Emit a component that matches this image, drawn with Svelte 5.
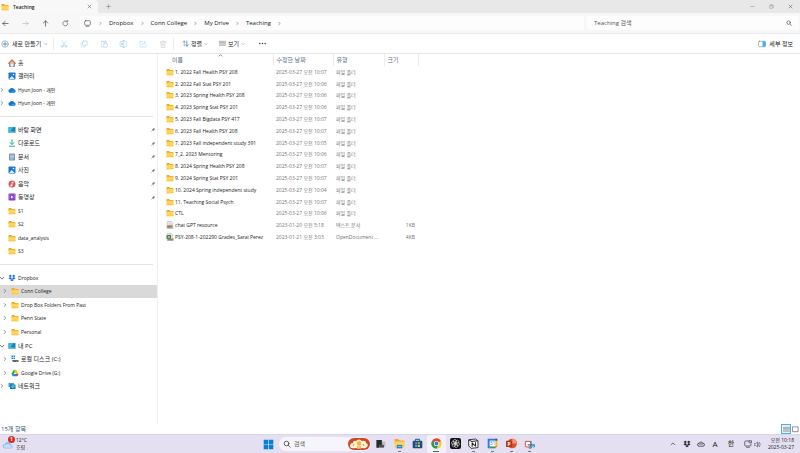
<script>
  const quick = [
    ['desktop', '바탕 화면', true], ['download', '다운로드', true], ['document', '문서', true],
    ['picture', '사진', true], ['music', '음악', true], ['video', '동영상', true],
    ['folder', 'S1'], ['folder', 'S2'], ['folder', 'data_analysis'], ['folder', 'S3']
  ];
  const top = [['home', '홈', ''], ['picture', '갤러리', ''], ['cloud', 'Hyun Joon - 개인', 'right'], ['cloud', 'Hyun Joon - 개인', 'right']];
  const tree = [
    ['dropbox', 'Dropbox', 'down', 0], ['folder', 'Conn College', 'right', 1, true],
    ['folder', 'Drop Box Folders From Past', 'right', 1], ['folder', 'Penn State', 'right', 1],
    ['folder', 'Personal', 'right', 1], ['desktop', '내 PC', 'down', 0],
    ['disk', '로컬 디스크 (C:)', 'right', 1], ['drive', 'Google Drive (G:)', 'right', 1],
    ['network', '네트워크', 'right', 0]
  ];
  const folders = [
    ['1. 2022 Fall Health PSY 208', '07'], ['2. 2022 Fall Stat PSY 201', '06'],
    ['3. 2023 Spring Health PSY 208', '06'], ['4. 2023 Spring Stat PSY 201', '06'],
    ['5. 2023 Fall Bigdata PSY 417', '07'], ['6. 2023 Fall Health PSY 208', '07'],
    ['7. 2023 Fall independent study 391', '05'], ['7_2. 2023 Mentoring', '06'],
    ['8. 2024 Spring Health PSY 208', '07'], ['9. 2024 Spring Stat PSY 201', '07'],
    ['10. 2024 Spring independent study', '04'], ['11. Teaching Social Psych', '07'], ['CTL', '06']
  ];
  const files = [
    ...folders.map(([name, m]) => ({ icon: 'folder', name, date: `2025-03-27 오전 10:${m}`, type: '파일 폴더', size: '' })),
    { icon: 'text', name: 'chat GPT resource', date: '2023-01-20 오전 5:18', type: '텍스트 문서', size: '1KB' },
    { icon: 'sheet', name: 'PSY-208-1-202290 Grades_Sarai Perez', date: '2023-01-21 오전 3:03', type: 'OpenDocument ...', size: '4KB' }
  ];
  const tools = [['cut', '잘라내기'], ['copy', '복사'], ['paste', '붙여넣기'], ['rename', '이름 바꾸기'], ['share', '공유'], ['trash', '삭제']];
  const apps = [
    ['taskview', '작업 보기', ''], ['explorer', '파일 탐색기', 'run'], ['store', '스토어', ''], ['chrome', 'Chrome', 'active'],
    ['gpt', 'ChatGPT', ''], ['notion', 'Notion', 'run'], ['calendar', '캘린더', 'run'], ['ppt', 'PowerPoint', 'run'], ['snip', '캡처 도구', 'run']
  ];
  const isKorean = (label) => /^[가-힣]/.test(label);
</script>

{#snippet icon(name, size = 8)}
  <svg class="icon" width={size} height={size} viewBox="0 0 16 16" fill="none" stroke-linecap="round" stroke-linejoin="round" aria-hidden="true">
    {#if name === 'folder'}
      <path d="M1 3.500Q1 2 2.500 2H6l2 2h5.500Q15 4 15 5.500V8H1z" fill="#e9a820" />
      <rect x="1" y="5.500" width="14" height="9" rx="1.200" fill="#ffd35c" />
      <path d="M1.500 13.500h13" stroke="#f3b92f" />
    {:else if name === 'home'}
      <path d="M3 7v8h3.500v-4.500h3V15H13V7L8 3z" fill="#bfc7cf" />
      <path d="M3 8v7h3M13 8v7h-3" stroke="#68737e" stroke-width="1.500" />
      <path d="M1.500 8.500 8 2l6.500 6.500" stroke="#e66b32" stroke-width="2.400" />
    {:else if name === 'picture'}
      <rect x="1" y="1" width="14" height="14" rx="1.500" fill="#1976d2" />
      <path d="m2 14 5.500-6 6 6z" fill="#d7efff" /><circle cx="11" cy="5" r="1.700" fill="#fff" />
    {:else if name === 'cloud'}
      <path d="M4 13.500a3.500 3.500 0 0 1-.4-6.900A5 5 0 0 1 12.600 7 3.300 3.300 0 0 1 12.500 13.500z" fill="#0b75d1" />
      <path d="m4 13.500 6-4.500 4.800 2.500a3 3 0 0 1-2.300 2z" fill="#2aa0ee" />
    {:else if name === 'desktop'}
      <rect x="1" y="2" width="14" height="11.500" rx="1.200" fill="#1684b8" />
      <path d="M1 4Q1 2 3 2h8L3 13.500Q1 13.500 1 12z" fill="#38bddb" /><path d="M4 12h8" stroke="#b9edf7" stroke-width="1.300" />
    {:else if name === 'download'}
      <path d="M8 1.500v9M4 7l4 4 4-4M2.500 14.500h11" stroke="#1ab08a" stroke-width="1.900" />
    {:else if name === 'document'}
      <rect x="2" y="1" width="12" height="14" rx="1.500" fill="#7797b9" /><path d="M5 4.500h6M5 7h6M5 9.500h6M5 12h4" stroke="#e9f2fb" stroke-width="1.200" />
    {:else if name === 'music'}
      <circle cx="8" cy="8" r="7" fill="#d45b55" /><path d="M8 11V4l3 1.500" stroke="#fff" stroke-width="1.500" /><circle cx="6.500" cy="11" r="1.800" fill="#fff" />
    {:else if name === 'video'}
      <rect x="1" y="1" width="14" height="14" rx="1.500" fill="#8643c8" /><path d="m6 5 5 3-5 3z" fill="#fff" /><path d="M3 3v10M13.500 3v10" stroke="#c69bea" stroke-dasharray="1 2.500" />
    {:else if name === 'dropbox' || name === 'dropbox-dark'}
      <path d="m4.500 1.500 3.500 2.300-3.500 2.300L1 3.800zm7 0L15 3.800l-3.500 2.300L8 3.800zm-7 4.700L8 8.500l-3.500 2.300L1 8.500zm7 0L15 8.500l-3.500 2.300L8 8.500zM8 9.800l3.500 2.300L8 14.500l-3.500-2.400z" fill={name === 'dropbox' ? '#0b62f5' : '#202028'} />
    {:else if name === 'disk'}
      <path d="M1 1h3v3H1zm4 0h3v3H5zM1 5h3v3H1zm4 0h3v3H5z" fill="#1889d8" /><path d="M2 10h13v4H4z" fill="#596673" /><path d="M11 12.500h2" stroke="#69e0a3" />
    {:else if name === 'drive'}
      <path d="M5.700 1.500h4.600L15 10h-4.700z" fill="#fbbc04" /><path d="M5.700 1.500 8 5.700 3.300 14.500 1 10z" fill="#0fa958" /><path d="M5.500 10H15l-2.300 4.500H3.300z" fill="#3478ee" /><path d="m11 10 4 0-2.300 4.500z" fill="#ea4335" />
    {:else if name === 'network'}
      <path d="M1 2h11v8H1z" fill="#44a1d2" /><path d="M4 5h11v9H4z" fill="#087fae" /><circle cx="10" cy="9" r="3.200" fill="#62d4e2" /><path d="m8.500 7.500 2.500 3" stroke="#166885" />
    {:else if name === 'text' || name === 'sheet'}
      <path d="M3.500 1h7l3 3v11h-10z" fill="#f5f5f2" stroke="#9b9b96" /><path d="M6 4h4M6 6.500h5" stroke="#aaa" />
      {#if name === 'text'}<path d="M1.500 8h12v6.500h-12z" fill="#b6a392" /><path d="M4 11.500h6" stroke="#65594f" stroke-width="1.500" />{:else}<path d="M1 4h9v8H1z" fill="#277a49" /><path d="m3.500 6 4 4m0-4-4 4" stroke="#fff" stroke-width="1.300" /><path d="M3 11h12v4H3z" fill="#a98459" />{/if}
    {:else if name === 'cut'}
      <path d="m4 1.500 6 9m2-9-6 9" stroke="#b8bec4" /><circle cx="4.500" cy="12.500" r="2" stroke="#8dc9ee" /><circle cx="11.500" cy="12.500" r="2" stroke="#8dc9ee" />
    {:else if name === 'copy'}
      <rect x="5" y="2" width="9.500" height="9" rx="2" stroke="#91cbed" /><path d="M5 5H3.500Q2 5 2 7v5q0 2 2 2h5q2 0 2-2" stroke="#b3cfe0" />
    {:else if name === 'paste'}
      <path d="M5 3H2.500v11H7M11 3h2v3M5 2h6v2H5z" stroke="#bfc5ca" /><rect x="7.500" y="6.500" width="7" height="8" rx="1" stroke="#8dc9ee" />
    {:else if name === 'rename'}
      <path d="M7 3H2v10h5M12 3h2.500v10H12" stroke="#8dc9ee" /><path d="M9.500 1v14M8 1h3M8 15h3M4 10l2-5 2 5M5 8.500h2" stroke="#9cbfd4" />
    {:else if name === 'share'}
      <path d="M7 3H2v11h12v-4M5 10q1-5 7-5M10 2l4 3-4 3" stroke="#9acfee" />
    {:else if name === 'trash'}
      <path d="M2 4h12M6 4V2h4v2M3.500 4l1 11h7l1-11M6.500 7v5M9.500 7v5" stroke="#bfc4c8" />
    {:else if name === 'plus-circle'}
      <circle cx="8" cy="8" r="6.500" stroke="#68747d" /><path d="M8 4.500v7M4.500 8h7" stroke="#2084c6" stroke-width="1.500" />
    {:else if name === 'sort'}
      <path d="M5 14V2M2 5l3-3 3 3" stroke="#727b82" stroke-width="1.300" /><path d="M11 2v12M8 11l3 3 3-3" stroke="#258bce" stroke-width="1.700" />
    {:else if name === 'lines'}
      <path d="M1 3h14M1 6h14M1 9h14M1 12h14" stroke="#777" stroke-width="1.300" />
    {:else if name === 'details'}
      <rect x="1" y="2.500" width="14" height="11" rx="2" stroke="#5d7890" /><path d="M9 2.500h4q2 0 2 2v7q0 2-2 2H9z" fill="#43b0f0" />
    {:else if name === 'monitor'}
      <rect x="1.500" y="1.500" width="13" height="10.500" rx="2" stroke="#555" stroke-width="1.500" /><path d="M5 14.500h6" stroke="#555" stroke-width="1.500" />
    {:else if name === 'left'}<path d="M14 8H2m5-5L2 8l5 5" stroke="#444" stroke-width="1.600" />
    {:else if name === 'forward'}<path d="M2 8h12M9 3l5 5-5 5" stroke="#b5b5b5" stroke-width="1.400" />
    {:else if name === 'up'}<path d="M8 14V2M3 7l5-5 5 5" stroke="#444" stroke-width="1.600" />
    {:else if name === 'reload'}<path d="M13.500 7.500a5.700 5.700 0 1 1-1.800-4M9.500 4H13V1" stroke="#555" stroke-width="1.500" />
    {:else if name === 'right'}<path d="m6 4 4 4-4 4" stroke="#666" stroke-width="1.900" />
    {:else if name === 'down'}<path d="m3 6 5 5 5-5" stroke="#444" stroke-width="2" />
    {:else if name === 'chev'}<path d="m3 6 5 5 5-5" stroke="#888" stroke-width="2" />
    {:else if name === 'caret'}<path d="m3 10 5-5 5 5" stroke="#444" stroke-width="1.900" />
    {:else if name === 'search'}<circle cx="7" cy="7" r="4.700" stroke="#444" stroke-width="1.600" /><path d="m10.500 10.500 4 4" stroke="#444" stroke-width="1.600" />
    {:else if name === 'close'}<path d="m3 3 10 10M13 3 3 13" stroke="#555" stroke-width="1.700" />
    {:else if name === 'plus'}<path d="M8 2v12M2 8h12" stroke="#777" stroke-width="1.700" />
    {:else if name === 'min'}<path d="M2 8h12" stroke="#888" stroke-width="1.500" />
    {:else if name === 'restore'}<rect x="2" y="5" width="9" height="9" rx="2" stroke="#888" stroke-width="1.500" /><path d="M5 2.500h6q3 0 3 3V11" stroke="#888" stroke-width="1.500" />
    {:else if name === 'dots'}<circle cx="2" cy="8" r="1.700" fill="#333" /><circle cx="8" cy="8" r="1.700" fill="#333" /><circle cx="14" cy="8" r="1.700" fill="#333" />
    {:else if name === 'pin'}<path d="m9 2 5 5-2 .5-3 3-.5 3L2.500 7.500l3-.5 3-3z" fill="#71818e" /><path d="m5.500 10.500-4 4" stroke="#71818e" stroke-width="1.500" />
    {:else if name === 'windows'}<path d="M1 1h6.500v6.500H1zm7.500 0H15v6.500H8.500zM1 8.500h6.500V15H1zm7.500 0H15V15H8.500z" fill="#0880d0" />
    {:else if name === 'weather'}
      <path d="M4 14a3 3 0 0 1-.3-6A4.500 4.500 0 0 1 12 8.500a2.800 2.800 0 0 1 0 5.500z" fill="#8ebdef" /><path d="M4 13a2 2 0 0 1 1-4 4 4 0 0 1 6 1 1.500 1.500 0 0 1 1 3z" fill="#c5def8" />
    {:else if name === 'taskview'}<path d="M5 5h10v8H5z" fill="#bcbcc0" /><path d="M2 3h8v7H6v4H2z" fill="#29292c" /><path d="M6 10h7v4H6z" fill="#4c4c50" />
    {:else if name === 'explorer'}<path d="M1 1.500h5l2 2h7V9H1z" fill="#eba51f" /><path d="M1 5h14v10H1z" fill="#ffd35a" /><path d="M4 10h8v5H4z" fill="#1a83d1" /><path d="M6 12.500h4" stroke="#b5e5fb" />
    {:else if name === 'store'}<path d="M5 4V2h6v2" stroke="#247db8" stroke-width="1.500" /><rect x="1" y="4" width="14" height="11" rx="1.500" fill="#174d83" /><path d="M4.500 6h3v3h-3z" fill="#f05a3d" /><path d="M8.500 6h3v3h-3z" fill="#80c34a" /><path d="M4.500 10h3v3h-3z" fill="#35b2ed" /><path d="M8.500 10h3v3h-3z" fill="#ffce38" />
    {:else if name === 'chrome'}
      <circle cx="8" cy="8" r="7.500" fill="#ffcd31" /><path d="M8 8 1.500 4.200A7.500 7.500 0 0 1 14.500 4.200z" fill="#e84235" /><path d="M1.500 4.200A7.500 7.500 0 0 0 8 15.500L11 9.500 8 8z" fill="#239b51" /><circle cx="8" cy="8" r="3.700" fill="#fff" /><circle cx="8" cy="8" r="2.800" fill="#347ce8" />
    {:else if name === 'gpt'}
      <rect width="16" height="16" rx="3" fill="#111" />
      <g stroke="#dcdcdc" stroke-width="0.900">{#each [0, 60, 120, 180, 240, 300] as a}<path d="M8 8V4.500L10.500 3q3 .5 2.500 3.500L8 9.500" transform={`rotate(${a} 8 8)`} />{/each}</g>
    {:else if name === 'notion'}<path d="m1.500 2.500 9.500-1 3.500 2.500v10l-10 1-3-3z" fill="#fff" stroke="#222" stroke-width="1.300" /><path d="M2 3l3 2 9-1M6 12.500V7l5 5V6.500" stroke="#222" stroke-width="1.500" />
    {:else if name === 'calendar'}<path d="M1 1h12v3H4v11H1z" fill="#3478e8" /><path d="M12 1h3v11h-3z" fill="#fbbc04" /><path d="M12 1h3v3h-3z" fill="#1a56c0" /><path d="M4 12h8v3H4z" fill="#2ba657" /><path d="m12 12 3 0-3 3z" fill="#ea4335" /><path d="M4 4h8v8H4z" fill="#fff" /><text x="8" y="10.500" text-anchor="middle" font-size="7" fill="#3478e8">31</text>
    {:else if name === 'ppt'}<circle cx="9" cy="8" r="7" fill="#d85232" /><path d="M9 1a7 7 0 0 1 7 7H9z" fill="#f29472" /><rect y="4" width="9" height="9" rx="1" fill="#b7351c" /><text x="4.500" y="11" text-anchor="middle" font-size="7" font-weight="700" fill="#fff">P</text>
    {:else if name === 'snip'}<rect x="2" y="5" width="8" height="8" rx="1" fill="#fff" stroke="#df4d32" stroke-width="1.400" /><path d="M10 5v8M6 10h9" stroke="#527287" stroke-width="1.700" /><circle cx="9" cy="14" r="1.500" stroke="#268ed2" stroke-width="1.200" /><circle cx="14" cy="12" r="1.500" stroke="#268ed2" stroke-width="1.200" />
    {:else if name === 'tray-cloud'}<path d="M4 12.500a3 3 0 0 1 0-6A4.500 4.500 0 0 1 12 6.500a3 3 0 0 1 0 6zM4.500 8h7" stroke="#35353d" stroke-width="1.600" />
    {:else if name === 'net'}<path d="M10 2H3Q1.500 2 1.500 3.500v7Q1.500 12 3 12h9q2 0 2-2V8M5 14.500h6M11 5.500h4v-4h-4z" stroke="#3a3a45" stroke-width="1.400" />
    {:else if name === 'sound'}<path d="M1 6h3l4-4v12L4 10H1zM10 5q2 3 0 6M12.500 3q4 5 0 10" stroke="#55555e" stroke-width="1.400" />
    {:else if name === 'tiles'}<rect x="2" y="2" width="12" height="11" stroke="#777" stroke-width="1.800" />
    {/if}
  </svg>
{/snippet}

{#snippet node(kind, label, arrow, level, selected, pinned)}
  <li class:selected class:nested={level === 1}>
    <span class="twist">{#if arrow}{@render icon(arrow, 6)}{/if}</span>
    <a href="#folder">{@render icon(kind)}<span class:ko={isKorean(label)}>{label}</span></a>
    {#if pinned}<span class="pin">{@render icon('pin', 5)}</span>{/if}
  </li>
{/snippet}

<div class="screen">
  <header class="titlebar">
    <div class="tab">{@render icon('folder')}<span>Teaching</span><button aria-label="탭 닫기">{@render icon('close', 5)}</button></div>
    <button class="newtab" aria-label="새 탭">{@render icon('plus', 5)}</button>
    <div class="winbtns">
      <button aria-label="최소화">{@render icon('min', 5)}</button><button aria-label="이전 크기로">{@render icon('restore', 5)}</button><button aria-label="닫기">{@render icon('close', 5)}</button>
    </div>
  </header>

  <nav class="address" aria-label="주소">
    <div class="history">
      <button aria-label="뒤로">{@render icon('left', 7)}</button><button aria-label="앞으로" disabled>{@render icon('forward', 7)}</button>
      <button aria-label="위로">{@render icon('up', 7)}</button><button aria-label="새로 고침">{@render icon('reload', 7)}</button>
    </div>
    <div class="crumbs">
      <span class="device">{@render icon('monitor', 7)}</span>
      {#each ['Dropbox', 'Conn College', 'My Drive', 'Teaching'] as c}{@render icon('right', 5)}<a href="#path">{c}</a>{/each}
      {@render icon('right', 5)}
    </div>
    <label class="find"><input type="text" placeholder="Teaching 검색" aria-label="Teaching 검색" />{@render icon('search', 6)}</label>
  </nav>

  <div class="commands">
    <button class="new">{@render icon('plus-circle')}<span>새로 만들기</span>{@render icon('chev', 4)}</button>
    <div class="tools">{#each tools as [k, l]}<button aria-label={l} disabled>{@render icon(k)}</button>{/each}</div>
    <button class="menu">{@render icon('sort', 7)}<span>정렬</span>{@render icon('chev', 4)}</button>
    <button class="menu">{@render icon('lines', 7)}<span>보기</span>{@render icon('chev', 4)}</button>
    <button class="more" aria-label="더 보기">{@render icon('dots', 7)}</button>
    <button class="detail">{@render icon('details')}<span>세부 정보</span></button>
  </div>

  <div class="body">
    <aside>
      <ul class="g4">{#each top as [k, l, a]}{@render node(k, l, a, 0, false, false)}{/each}</ul>
      <hr />
      <ul class="g10">{#each quick as [k, l, p]}{@render node(k, l, '', 0, false, p)}{/each}</ul>
      <hr />
      <ul class="g9">{#each tree as [k, l, a, v, s]}{@render node(k, l, a, v, s, false)}{/each}</ul>
    </aside>
    <main>
      <table>
        <colgroup><col class="c1" /><col class="c2" /><col class="c3" /><col class="c4" /></colgroup>
        <thead><tr><th>이름<span class="sorted">{@render icon('caret', 5)}</span></th><th>수정한 날짜</th><th>유형</th><th>크기</th></tr></thead>
        <tbody>
          {#each files as f}
            <tr><td><a href="#file">{@render icon(f.icon)}<span>{f.name}</span></a></td><td>{f.date}</td><td>{f.type}</td><td>{f.size}</td></tr>
          {/each}
        </tbody>
      </table>
    </main>
  </div>

  <div class="status"><span class="ko">15개 항목</span><div><button class="on" aria-label="자세히">{@render icon('lines', 7)}</button><button aria-label="큰 아이콘">{@render icon('tiles', 7)}</button></div></div>

  <footer>
    <button class="weather"><span class="wicon">{@render icon('weather', 12)}<b>1</b></span><span class="wtext"><span>12°C</span><span>흐림</span></span></button>
    <div class="dock">
      <button class="start" aria-label="시작">{@render icon('windows', 11)}</button>
      <label class="tsearch">
        {@render icon('search', 8)}<input type="text" placeholder="검색" aria-label="검색" />
        <svg width="22" height="12" viewBox="0 0 22 12" aria-hidden="true"><rect width="22" height="12" rx="6" fill="#cf442a" /><path d="M2 8Q2 5 5 5q0-3 3-2 3-3 6 0 4-1 4 2 3 1 1 4-2 2-5 1-3 1-6 0-6 1-6-2z" fill="#fff3d3" /><circle cx="11" cy="5.500" r="2.200" fill="#f6b52d" /><path d="m5 8 1-2m10 2-1-2M9 9h4" stroke="#df8b32" /></svg>
      </label>
      <div class="apps">{#each apps as [k, l, s]}<button class={s} aria-label={l}>{@render icon(k, 11)}</button>{/each}</div>
    </div>
    <div class="tray">
      <button aria-label="숨겨진 아이콘">{@render icon('caret', 6)}</button><button aria-label="Dropbox">{@render icon('dropbox-dark', 8)}</button>
      <button aria-label="OneDrive">{@render icon('tray-cloud', 8)}</button><button class="letter">A</button><button class="letter han">한</button>
      <button class="netsound" aria-label="네트워크 및 소리">{@render icon('net', 8)}{@render icon('sound', 7)}</button>
      <button class="clock"><span>오전 10:18</span><span>2025-03-27</span></button>
    </div>
  </footer>
</div>

<style>
  :global(body) { margin: 0; }
  .screen { min-height: 100vh; display: flex; flex-direction: column; background: #fff; color: #222; font: 5px/8px "Open Sans", "Noto Sans CJK KR", sans-serif; }
  .screen * { box-sizing: border-box; }
  button, input { font: inherit; color: inherit; border: 0; padding: 0; margin: 0; background: none; min-width: 0; }
  button { display: inline-flex; align-items: center; justify-content: center; }
  a { color: inherit; text-decoration: none; }
  .icon { flex: none; display: block; }
  .ko { font-size: 6px; }
  input { outline: 0; }
  input::placeholder { color: #555; opacity: 1; }

  .titlebar { height: 13px; background: #e8e8e8; display: flex; align-items: stretch; }
  .tab { width: 98px; background: #f8f8f8; border-radius: 0 4px 0 0; display: flex; align-items: center; gap: 4px; padding: 0 6px 0 1px; color: #222; font-weight: 600; }
  .tab button { margin-left: auto; }
  .newtab { width: 20px; }
  .winbtns { margin-left: auto; display: flex; }
  .winbtns button { width: 19px; }

  .address { height: 21px; padding: 3px 1px 3px 0; background: #f7f7f7; border-bottom: 1px solid #ebebeb; display: flex; gap: 3px; font-size: 6px; }
  .history { width: 71px; margin-right: 6px; display: flex; justify-content: space-between; }
  .history button { width: 10px; }
  .crumbs, .find { background: #fdfdfd; border-radius: 2px; display: flex; align-items: center; }
  .crumbs { flex: 1; padding-left: 4px; gap: 6px; }
  .device { margin-right: 1px; }
  .find { width: 212px; padding: 0 7px; }
  .find input { flex: 1; }

  .commands { height: 20px; border-bottom: 1px solid #e6e6e6; display: flex; align-items: center; padding: 0 7px 0 1px; font-size: 6px; }
  .commands button { gap: 2px; white-space: nowrap; }
  .commands .new { width: 46px; justify-content: flex-start; gap: 3px; }
  .tools { width: 121px; margin: 0 8px 0 6px; display: flex; border: solid #eee; border-width: 0 1px; }
  .tools button { flex: 1; height: 12px; }
  .commands .menu { width: 37px; justify-content: flex-start; }
  .more { margin-left: 3px; }
  .commands .detail { margin-left: auto; gap: 3px; }

  .body { flex: 1; display: flex; }
  aside { width: 158px; padding-top: 2px; border-right: 1px solid #f0f0f0; }
  ul { list-style: none; margin: 0; padding: 0; display: flex; flex-direction: column; }
  li { flex: 1; display: flex; align-items: center; padding-right: 1px; }
  .g4 { height: 54px; } .g10 { height: 135px; } .g9 { height: 122px; }
  hr { border: 0; border-top: 1px solid #e3e3e3; margin: 6px 4px 6px 0; }
  li a { display: flex; align-items: center; gap: 2px; }
  .twist { width: 8px; margin-left: -1px; margin-right: 1px; }
  .nested .twist { width: 9px; margin-left: 2px; margin-right: 0; }
  .selected { background: #d9d9d9; }
  .pin { margin-left: auto; }

  main { flex: 1; padding-left: 6px; }
  table { border-collapse: collapse; table-layout: fixed; width: 254px; height: 189px; }
  .c1 { width: 109px; } .c2 { width: 60px; } .c3 { width: 51px; } .c4 { width: 34px; }
  th, td { padding: 0 0 0 3px; text-align: left; white-space: nowrap; color: #747474; font-weight: 400; }
  th { height: 12px; font-size: 6px; color: #5f7085; border-right: 1px solid #ececec; position: relative; }
  th:first-child { padding-left: 8px; }
  .sorted { position: absolute; top: -1px; left: 54px; }
  td:last-child { text-align: right; padding-right: 3px; }
  td:first-child { padding-left: 2px; color: #222; }
  td a { display: flex; align-items: center; gap: 1px; }

  .status { height: 10px; display: flex; justify-content: space-between; align-items: center; padding: 0 0 0 1px; color: #34536f; }
  .status div { display: flex; }
  .status button { width: 9px; height: 10px; }
  .status .on { border: 1px solid #56aee0; background: #e5f3fc; width: 10px; }

  footer { height: 19px; background: #e4dff1; border-top: 1px solid #dad5e5; display: grid; grid-template-columns: 1fr auto 1fr; align-items: center; }
  .weather { justify-self: start; gap: 2px; padding-left: 2px; line-height: 7px; }
  .wicon { position: relative; }
  .wicon b { position: absolute; top: -2px; right: -1px; width: 7px; height: 7px; border-radius: 4px; background: #d52b24; color: #fff; font-size: 5px; line-height: 7px; }
  .wtext, .clock { display: flex; flex-direction: column; }
  .wtext { align-items: flex-start; }
  .dock { display: flex; align-items: center; height: 18px; padding-right: 2px; }
  .start { width: 18px; margin-right: 2px; }
  .tsearch { width: 92px; height: 14px; border-radius: 7px; background: #f7f5fc; display: flex; align-items: center; gap: 3px; padding: 0 1px 0 4px; font-size: 6px; }
  .tsearch input { flex: 1; }
  .apps { width: 168px; height: 18px; display: flex; }
  .apps button { flex: 1; border-bottom: 1px solid transparent; position: relative; }
  .apps .active { background: #f4f1fa; border-radius: 2px; }
  .apps .run::after, .apps .active::after { content: ""; position: absolute; bottom: 0; width: 3px; height: 1px; background: #777; }
  .apps .active::after { width: 6px; background: #286e83; }
  .tray { display: flex; justify-content: flex-end; align-items: center; padding-right: 6px; }
  .tray button { width: 14px; }
  .tray .letter { font-size: 8px; }
  .tray .han { font-size: 7px; width: 18px; }
  .tray .netsound { width: 25px; gap: 2px; }
  .tray .clock { width: auto; margin-left: 3px; align-items: flex-end; line-height: 7px; }
</style>
